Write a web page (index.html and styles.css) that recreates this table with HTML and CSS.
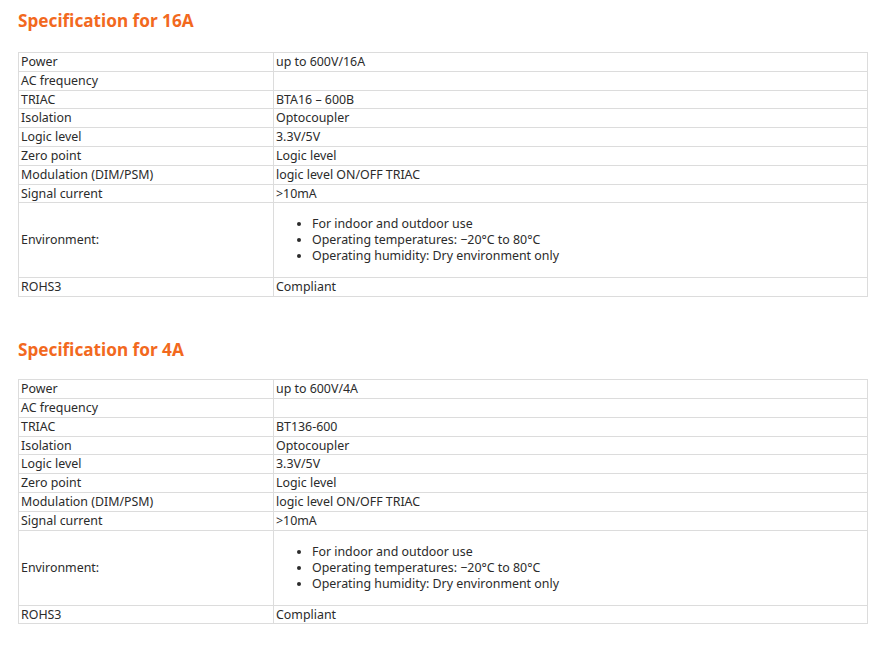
FILE: index.html
```html
<!DOCTYPE html>
<html>
<head>
<meta charset="utf-8">
<link rel="stylesheet" href="styles.css">
</head>
<body>
<section class="spec">
  <h2 class="spec-title">Specification for 16A</h2>
  <table class="spec-table">
    <tr><td class="k">Power</td><td>up to 600V/16A</td></tr>
    <tr><td class="k">AC frequency</td><td></td></tr>
    <tr><td class="k">TRIAC</td><td>BTA16 – 600B</td></tr>
    <tr><td class="k">Isolation</td><td>Optocoupler</td></tr>
    <tr><td class="k">Logic level</td><td>3.3V/5V</td></tr>
    <tr><td class="k">Zero point</td><td>Logic level</td></tr>
    <tr><td class="k">Modulation (DIM/PSM)</td><td>logic level ON/OFF TRIAC</td></tr>
    <tr><td class="k">Signal current</td><td>&gt;10mA</td></tr>
    <tr><td class="k">Environment:</td><td><ul class="env"><li>For indoor and outdoor use</li><li>Operating temperatures: −20°C to 80°C</li><li>Operating humidity: Dry environment only</li></ul></td></tr>
    <tr><td class="k">ROHS3</td><td>Compliant</td></tr>
  </table>
</section>
<section class="spec">
  <h2 class="spec-title">Specification for 4A</h2>
  <table class="spec-table">
    <tr><td class="k">Power</td><td>up to 600V/4A</td></tr>
    <tr><td class="k">AC frequency</td><td></td></tr>
    <tr><td class="k">TRIAC</td><td>BT136-600</td></tr>
    <tr><td class="k">Isolation</td><td>Optocoupler</td></tr>
    <tr><td class="k">Logic level</td><td>3.3V/5V</td></tr>
    <tr><td class="k">Zero point</td><td>Logic level</td></tr>
    <tr><td class="k">Modulation (DIM/PSM)</td><td>logic level ON/OFF TRIAC</td></tr>
    <tr><td class="k">Signal current</td><td>&gt;10mA</td></tr>
    <tr><td class="k">Environment:</td><td><ul class="env"><li>For indoor and outdoor use</li><li>Operating temperatures: −20°C to 80°C</li><li>Operating humidity: Dry environment only</li></ul></td></tr>
    <tr><td class="k">ROHS3</td><td>Compliant</td></tr>
  </table>
</section>
</body>
</html>
```

FILE: styles.css
```css
html, body {
  margin: 0;
  padding: 0;
  background: #fff;
}
body {
  padding: 0 18px;
  font-family: "Noto Sans", sans-serif;
  color: #2b2b2b;
  font-size: 12.4px;
}
.spec-title {
  margin: 0;
  padding-top: 10px;
  height: 52px;
  box-sizing: border-box;
  font-size: 17.2px;
  line-height: 22px;
  font-weight: 700;
  color: #f2691e;
}
.spec + .spec .spec-title {
  height: 82px;
  padding-top: 42px;
}
.spec-table {
  width: 850px;
  border-collapse: collapse;
}
.spec-table td {
  border: 1px solid #dcdcdc;
  padding: 1px 2px;
  line-height: 15.8px;
  vertical-align: middle;
}
.spec-table td.k {
  width: 250px;
}
.env {
  margin: 12px 0;
  padding-left: 36px;
  line-height: 16px;
}
```
